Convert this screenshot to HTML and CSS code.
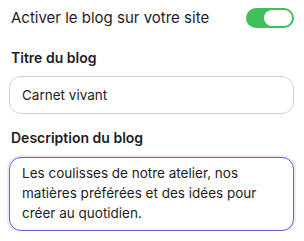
FILE: index.html
```html
<!DOCTYPE html>
<html lang="fr">
<head>
    <meta charset="UTF-8">
    <title>Réglages du blog</title>
    <link rel="stylesheet" href="styles.css">
</head>
<body>
    <div class="blog-settings">
        <div class="toggle-row">
            <span class="toggle-label">Activer le blog sur votre site</span>
            <span class="switch on" role="switch" aria-checked="true"><span class="knob"></span></span>
        </div>

        <div class="field">
            <label for="blog-title">Titre du blog</label>
            <input id="blog-title" type="text" value="Carnet vivant">
        </div>

        <div class="field">
            <label for="blog-desc">Description du blog</label>
            <textarea id="blog-desc" rows="3">Les coulisses de notre atelier, nos matières préférées et des idées pour créer au quotidien.</textarea>
        </div>
    </div>
</body>
</html>
```

FILE: styles.css
```css
body { margin: 0; background: #fff; color: #1d1d1f; font-family: Inter, "Noto Sans", sans-serif; font-size: 13.5px; }
.blog-settings { display: flex; flex-direction: column; padding: 0 10px 0 9px; }
.toggle-row { display: flex; align-items: center; justify-content: space-between; height: 36px; padding-left: 2px; }
.toggle-label { font-size: 15px; line-height: 20px; }
.switch { width: 48px; height: 20px; border-radius: 10px; background: #d4d4d8; display: flex; align-items: center; justify-content: flex-start; padding: 0 2px; box-sizing: border-box; }
.switch.on { background: #3fbf5e; justify-content: flex-end; }
.knob { width: 28px; height: 16px; border-radius: 8px; background: #fff; }
.field { display: flex; flex-direction: column; margin-top: 12px; }
.field + .field { margin-top: 14px; }
.field label { font-weight: 600; font-size: 14px; line-height: 20px; padding-left: 2px; margin-bottom: 8px; }
.field + .field label { margin-bottom: 9px; }
input, textarea { font: inherit; color: inherit; box-sizing: border-box; width: 100%; margin: 0; border-radius: 12px; outline: none; }
input { height: 38px; border: 1px solid #d2d2d2; padding: 0 12px; }
textarea { height: 74px; border: 1.5px solid #7e55c6; box-shadow: 0 0 0 2px rgba(126, 85, 198, 0.12); padding: 5px 12px 6px 12px; line-height: 20px; resize: none; overflow: hidden; }
```
